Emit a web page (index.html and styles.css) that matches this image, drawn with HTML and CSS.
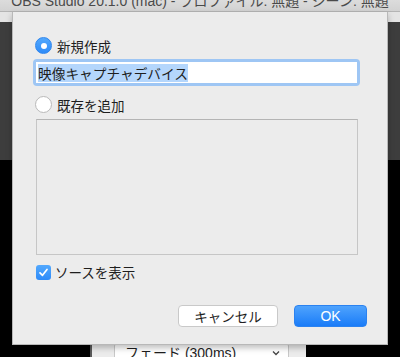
FILE: index.html
```html
<!DOCTYPE html>
<html lang="ja">
<head>
    <meta charset="UTF-8">
    <title>ソースを作成/選択</title>
    <link rel="stylesheet" href="styles.css">
</head>
<body>

    <div id="window">
        <div class="titlebar">
            <div class="title">OBS Studio 20.1.0 (mac) - プロファイル: 無題 - シーン: 無題</div>
        </div>
        <div class="toolbar"></div>
        <div class="preview"></div>
        <div class="lower">
            <div class="panel">
                <div class="dropdown">
                    <span>フェード (300ms)</span>
                    <svg class="chevron" width="8" height="6" viewBox="0 0 8 6"><path d="M1 1.5 L4 4.5 L7 1.5" fill="none" stroke="#444" stroke-width="1.3"/></svg>
                </div>
            </div>
        </div>
    </div>

    <div id="dialog">
        <label class="option">
            <span class="radio checked"></span>
            <span>新規作成</span>
        </label>
        <div class="field">
            <div class="field-inner"><span class="selected">映像キャプチャデバイス</span></div>
        </div>
        <label class="option second">
            <span class="radio"></span>
            <span>既存を追加</span>
        </label>
        <div class="list"></div>
        <label class="check-row">
            <span class="checkbox">
                <svg width="11" height="11" viewBox="0 0 11 11"><path d="M2 5.8 L4.5 8.3 L9 2.5" fill="none" stroke="#fff" stroke-width="1.7" stroke-linecap="round" stroke-linejoin="round"/></svg>
            </span>
            <span>ソースを表示</span>
        </label>
        <div class="buttons">
            <button class="cancel">キャンセル</button>
            <button class="ok">OK</button>
        </div>
    </div>

</body>
</html>
```

FILE: styles.css
```css
body {
    margin: 0;
    width: 400px;
    height: 357px;
    overflow: hidden;
    background-color: #000;
    font-family: 'Noto Sans CJK JP', 'Liberation Sans', sans-serif;
    color: #1e1e1e;
}

#window {
    display: flex;
    flex-direction: column;
    height: 357px;
}

.titlebar {
    flex-shrink: 0;
    height: 11px;
    overflow: hidden;
    background: linear-gradient(#dcdcdc, #d2d2d2);
    border-bottom: 1px solid #b4b4b4;
}

.title {
    margin-top: -7px;
    font-family: 'Liberation Sans', 'Noto Sans CJK JP', sans-serif;
    font-size: 14px;
    line-height: 17px;
    text-align: center;
    color: #4a4a4a;
}

.toolbar {
    flex-shrink: 0;
    height: 10px;
    background-color: #e4e4e4;
}

.preview {
    flex-shrink: 0;
    height: 138px;
    background-color: #3d3d3d;
}

.lower {
    flex: 1;
    min-height: 0;
    overflow: hidden;
    background-color: #000;
}

.panel {
    width: 216px;
    height: 40px;
    margin: 169px 0 0 90px;
    padding: 13px 0 0 22px;
    box-sizing: border-box;
    background-color: #ececec;
    border-left: 2px solid #5a5a5a;
}

.dropdown {
    width: 175px;
    height: 22px;
    box-sizing: border-box;
    display: flex;
    align-items: center;
    justify-content: space-between;
    padding: 0 8px 0 10px;
    background-color: #fff;
    border: 1px solid #c8c8c8;
    border-radius: 4px;
    font-family: 'Liberation Sans', 'Noto Sans CJK JP', sans-serif;
    font-size: 14px;
    line-height: 16px;
    color: #1e1e1e;
}

#dialog {
    position: absolute;
    left: 12px;
    top: 12px;
    width: 376px;
    height: 333px;
    box-sizing: border-box;
    padding: 25px 0 0 22px;
    background-color: #ececec;
    border: 1px solid #b8b8b8;
    border-top: none;
    box-shadow: 0 3px 6px rgba(0, 0, 0, 0.25);
    font-size: 13.5px;
}

.option {
    display: flex;
    align-items: center;
    gap: 5px;
    height: 17px;
}

.option.second {
    margin-top: 10px;
}

.radio {
    width: 17px;
    height: 17px;
    box-sizing: border-box;
    border-radius: 50%;
    background-color: #fff;
    border: 1px solid #b9b9b9;
}

.radio.checked {
    display: flex;
    align-items: center;
    justify-content: center;
    background: linear-gradient(#52a8fd, #2e8bf9);
    border-color: #2f86ee;
}

.radio.checked::after {
    content: '';
    width: 6px;
    height: 6px;
    border-radius: 50%;
    background-color: #fff;
}

.field {
    width: 327px;
    height: 27px;
    box-sizing: border-box;
    margin: 5px 0 0 -2px;
    padding: 3px;
    background-color: #9ec6f4;
    border-radius: 4px;
}

.field-inner {
    height: 21px;
    display: flex;
    align-items: center;
    padding-left: 2px;
    background-color: #fff;
    font-size: 13.7px;
}

.selected {
    background-color: #b4d6fc;
    line-height: 18px;
}

.list {
    width: 322px;
    height: 136px;
    box-sizing: border-box;
    margin: 6px 0 0 1px;
    background-color: #ececec;
    border: 1px solid #c6c6c6;
    border-top-color: #b4b4b4;
}

.check-row {
    display: flex;
    align-items: center;
    gap: 4px;
    height: 16px;
    margin: 9px 0 0 1px;
}

.checkbox {
    width: 15px;
    height: 15px;
    display: flex;
    align-items: center;
    justify-content: center;
    border-radius: 3px;
    background: linear-gradient(#52a8fd, #2e8bf9);
}

.buttons {
    display: flex;
    gap: 16px;
    margin: 25px 0 0 143px;
}

button {
    height: 22px;
    box-sizing: border-box;
    border-radius: 4px;
    font-family: 'Noto Sans CJK JP', 'Liberation Sans', sans-serif;
    font-size: 13.5px;
    line-height: 20px;
    padding: 0;
}

button.cancel {
    width: 100px;
    background-color: #fff;
    border: 1px solid #c9c9c9;
    color: #1e1e1e;
}

button.ok {
    width: 73px;
    background: linear-gradient(#4fa3fd, #1a7cf8);
    border: 1px solid #2b82f0;
    color: #fff;
    font-family: 'Liberation Sans', sans-serif;
    font-size: 14px;
}
```
